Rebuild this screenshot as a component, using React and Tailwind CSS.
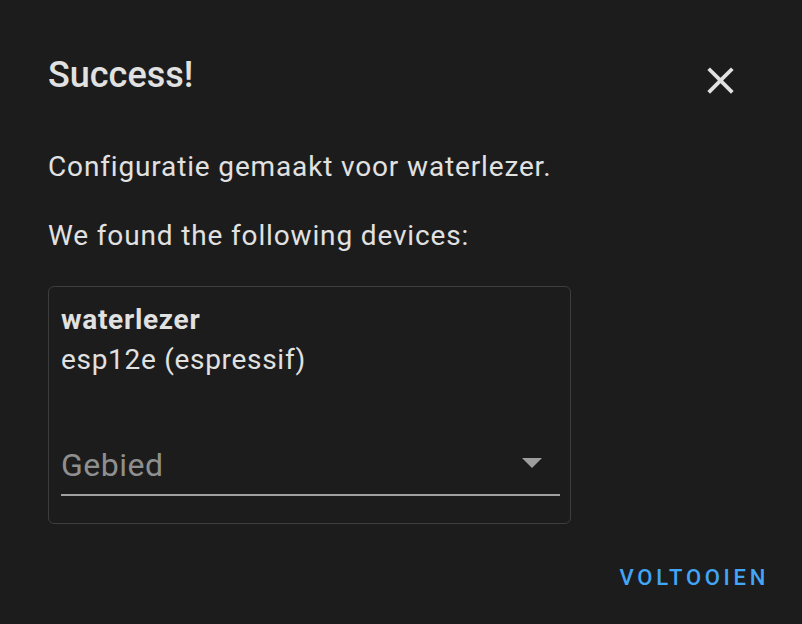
import React from "react";

// Close icon (material "close")
function CloseIcon() {
  return (
    <svg viewBox="0 0 24 24" className="w-[45px] h-[45px]" fill="#e1e1e1">
      <path d="M19 6.41L17.59 5 12 10.59 6.41 5 5 6.41 10.59 12 5 17.59 6.41 19 12 13.41 17.59 19 19 17.59 13.41 12z" />
    </svg>
  );
}

function Caret() {
  return (
    <svg viewBox="0 0 20 10" className="w-[20px] h-[10px]" fill="#9e9e9e">
      <polygon points="0,0 20,0 10,10" />
    </svg>
  );
}

export default function App() {
  return (
    <div
      className="w-[802px] h-[624px] bg-[#1c1c1c] text-[#e1e1e1] overflow-hidden flex flex-col"
      style={{ fontFamily: "Roboto, 'Liberation Sans', sans-serif" }}
    >
      {/* Header */}
      <div className="flex items-start justify-between pl-[48px] pr-[59px] pt-[53px]">
        <h1 className="text-[36px] leading-[44px] font-medium tracking-[0px]">
          Success!
        </h1>
        <button className="mt-[5px]">
          <CloseIcon />
        </button>
      </div>

      {/* Content */}
      <div className="pl-[48px] text-[28px] leading-[36px] tracking-[0.85px]">
        <p className="mt-[46px]">Configuratie gemaakt voor waterlezer.</p>
        <p className="mt-[33px]">We found the following devices:</p>
      </div>

      {/* Device card */}
      <div className="ml-[48px] mt-[32px] w-[523px] h-[238px] border border-[#3d3d3d] rounded-[6px] pt-[13px] pl-[12px] pr-[10px]">
        <div className="text-[28px] leading-[40px] tracking-[0.7px]">
          <div className="font-bold tracking-[0.7px]">waterlezer</div>
          <div>esp12e (espressif)</div>
        </div>
        <div className="mt-[65px] flex items-center justify-between border-b-2 border-[#a0a0a0] pb-[9px]">
          <span className="text-[32px] leading-[40px] text-[#8f8f8f] tracking-[0.5px]">
            Gebied
          </span>
          <span className="mr-[18px] mt-[-4px]">
            <Caret />
          </span>
        </div>
      </div>

      {/* Actions */}
      <div className="flex justify-end pr-[33px] mt-[40px]">
        <button className="text-[22px] leading-[28px] font-medium tracking-[3.7px] text-[#42a5f5]">
          VOLTOOIEN
        </button>
      </div>
    </div>
  );
}
